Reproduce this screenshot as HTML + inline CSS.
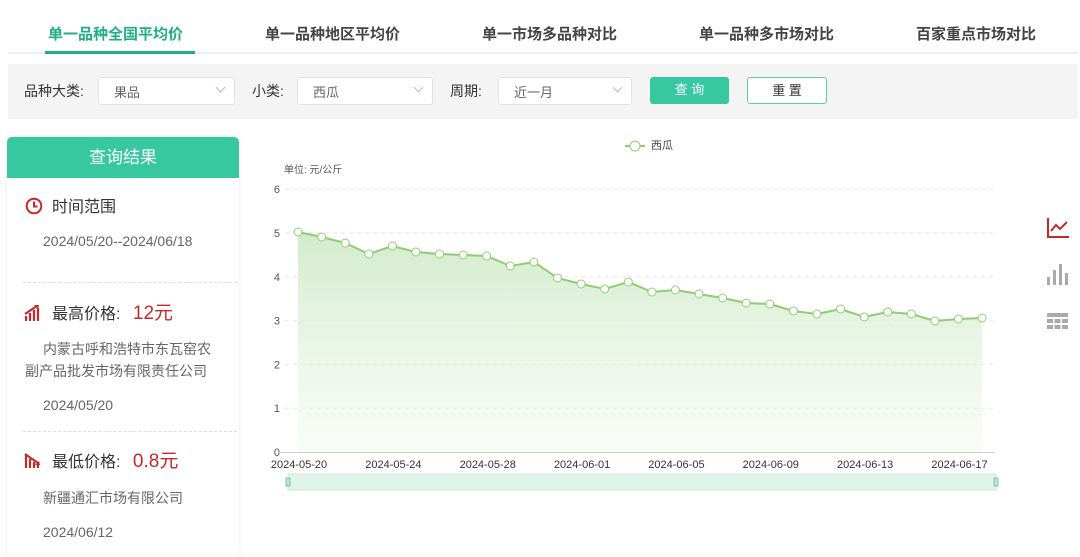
<!DOCTYPE html>
<html><head><meta charset="utf-8">
<style>
*{margin:0;padding:0;box-sizing:border-box}
body{width:1080px;height:552px;background:#fff;font-family:"Liberation Sans","Noto Sans CJK SC",sans-serif;position:relative;overflow:hidden;color:#333}
.tabs{position:absolute;left:8px;top:0;width:1070px;height:54px;border-bottom:2px solid #eef0ef}
.tab{position:absolute;top:23px;font-size:15px;font-weight:bold;color:#444}
.tab.on{color:#1fae85}
.ul{position:absolute;left:37px;top:51px;width:150px;height:3px;background:#1fae85}
.bar{position:absolute;left:8px;top:64px;width:1070px;height:55px;background:#f5f4f4}
.lbl{position:absolute;top:81px;font-size:14px;color:#333}
.sel{position:absolute;top:77px;height:28px;background:#fff;border:1px solid #e2e2e2;border-radius:3px;font-size:13px;color:#666;padding:4px 0 0 15px}
.sel i{position:absolute;right:10px;top:6px;width:7px;height:7px;border-right:1px solid #bbb;border-bottom:1px solid #bbb;transform:rotate(45deg)}
.btn{position:absolute;top:77px;height:27px;border-radius:3px;font-size:13px;text-align:center;line-height:26px}
.panel{position:absolute;left:7px;top:137px;width:232px;height:420px;background:#fff;box-shadow:0 0 6px rgba(0,0,0,.08);border-radius:5px 5px 0 0}
.ph{height:41px;background:#37c8a0;color:#fff;font-size:17px;text-align:center;line-height:41px;border-radius:5px 5px 0 0}
.t{position:absolute;font-size:16px;color:#333}
.g{position:absolute;font-size:14px;color:#666}
.red{color:#c6282c;font-size:19px}
.dash{position:absolute;left:16px;width:214px;border-top:1px dashed #ddd}
</style></head><body>
<div class="tabs">
<div class="tab on" style="left:40px">单一品种全国平均价</div>
<div class="tab" style="left:257px">单一品种地区平均价</div>
<div class="tab" style="left:474px">单一市场多品种对比</div>
<div class="tab" style="left:691px">单一品种多市场对比</div>
<div class="tab" style="left:908px">百家重点市场对比</div>
<div class="ul"></div>
</div>
<div class="bar"></div>
<div class="lbl" style="left:24px">品种大类:</div>
<div class="sel" style="left:98px;width:137px">果品<i></i></div>
<div class="lbl" style="left:252px">小类:</div>
<div class="sel" style="left:297px;width:136px">西瓜<i></i></div>
<div class="lbl" style="left:450px">周期:</div>
<div class="sel" style="left:498px;width:134px">近一月<i></i></div>
<div class="btn" style="left:650px;width:79px;background:#37c8a0;color:#fff">查 询</div>
<div class="btn" style="left:747px;width:80px;background:#fff;border:1px solid #5fcfae;color:#333">重 置</div>

<div class="panel">
<div class="ph">查询结果</div>
<svg style="position:absolute;left:18px;top:60px" width="18" height="18" viewBox="0 0 18 18"><circle cx="9" cy="9" r="7.3" fill="none" stroke="#c6282c" stroke-width="2"/><path d="M9 4.5V9.5H12.5" fill="none" stroke="#c6282c" stroke-width="2"/></svg>
<div class="t" style="left:45px;top:56px">时间范围</div>
<div class="g" style="left:36px;top:96px">2024/05/20--2024/06/18</div>
<div class="dash" style="top:145px"></div>
<svg style="position:absolute;left:17px;top:167px" width="20" height="18" viewBox="0 0 20 18"><path d="M2 17V12M6 17V9M10 17V6M14 17V4M1 10L13 2" stroke="#c6282c" stroke-width="2.2" fill="none"/><path d="M10 1L15 1L14 5Z" fill="#c6282c"/></svg>
<div class="t" style="left:45px;top:161px">最高价格: <span class="red" style="margin-left:8px">12元</span></div>
<div class="g" style="left:36px;top:202px">内蒙古呼和浩特市东瓦窑农</div>
<div class="g" style="left:18px;top:224px">副产品批发市场有限责任公司</div>
<div class="g" style="left:36px;top:260px">2024/05/20</div>
<div class="dash" style="top:294px"></div>
<svg style="position:absolute;left:17px;top:314px" width="20" height="18" viewBox="0 0 20 18"><path d="M2 17V4M6 17V8M10 17V11M14 17V14M1 3L14 12" stroke="#c6282c" stroke-width="2.2" fill="none"/><path d="M16 14L11 14L15 10Z" fill="#c6282c"/></svg>
<div class="t" style="left:45px;top:309px">最低价格: <span class="red" style="margin-left:8px">0.8元</span></div>
<div class="g" style="left:36px;top:351px">新疆通汇市场有限公司</div>
<div class="g" style="left:36px;top:387px">2024/06/12</div>
</div>

<svg id="ch" style="position:absolute;left:0;top:0" width="1080" height="552">
<defs><linearGradient id="gr" x1="0" y1="0" x2="0" y2="1"><stop offset="0" stop-color="#cde9c4" stop-opacity=".9"/><stop offset="1" stop-color="#eef8ec" stop-opacity=".4"/></linearGradient></defs>
<g font-family="Liberation Sans,Noto Sans CJK SC,sans-serif" font-size="11" fill="#555">
<line x1="625" y1="146" x2="645" y2="146" stroke="#91cc75" stroke-width="2"/><circle cx="635" cy="146" r="5" fill="#fff" stroke="#91cc75"/>
<text x="651" y="149" font-size="11" fill="#444">西瓜</text>
<text x="284" y="173" font-size="10">单位: 元/公斤</text>
</g>
<g id="grid" stroke="#e6e6e6" stroke-dasharray="4,4"></g>
<g id="yl" font-family="Liberation Sans,sans-serif" font-size="11" fill="#555" text-anchor="end"></g>
<path id="area" fill="url(#gr)"/>
<polyline id="ln" fill="none" stroke="#91cc75" stroke-width="2"/>
<g id="pts"></g>
<line x1="279" y1="452.5" x2="994" y2="452.5" stroke="#ccc"/>
<g id="xl" font-family="Liberation Sans,sans-serif" font-size="11" fill="#333" text-anchor="middle"></g>
<rect x="288" y="474" width="708" height="16" fill="#e0f5ea" stroke="#cfe6d8"/>
<rect x="286" y="478" width="4" height="8" fill="#bde5cf" stroke="#6bbf97" stroke-width=".8"/>
<rect x="994" y="478" width="4" height="8" fill="#bde5cf" stroke="#6bbf97" stroke-width=".8"/>
<path d="M1048 218V237H1069" fill="none" stroke="#c6282c" stroke-width="2"/><path d="M1051 231L1056 225L1060 229L1067 222" fill="none" stroke="#c6282c" stroke-width="2"/>
<g fill="#aaa"><rect x="1047" y="277" width="3" height="8"/><rect x="1053" y="270" width="3" height="15"/><rect x="1059" y="264" width="3" height="21"/><rect x="1065" y="273" width="3" height="12"/></g>
<g fill="#aaa"><rect x="1047" y="313" width="21" height="4"/><rect x="1047" y="319" width="6" height="4"/><rect x="1054.5" y="319" width="6" height="4"/><rect x="1062" y="319" width="6" height="4"/><rect x="1047" y="325" width="6" height="4"/><rect x="1054.5" y="325" width="6" height="4"/><rect x="1062" y="325" width="6" height="4"/></g>
</svg>
<script>
var ys=[232,237,243,254,246,252,254,255,256,266,262,278,284,289,282,292,290,294,298,303,304,311,314,309,317,312,314,321,319,318];
var ns="http://www.w3.org/2000/svg",p=[];
ys.forEach(function(y,i){p.push((298+i*23.59).toFixed(1)+","+y)});
document.getElementById("ln").setAttribute("points",p.join(" "));
document.getElementById("area").setAttribute("d","M298,452L"+p.join("L")+"L982,452Z");
var g=document.getElementById("pts");
p.forEach(function(s){var a=s.split(","),c=document.createElementNS(ns,"circle");c.setAttribute("cx",a[0]);c.setAttribute("cy",a[1]);c.setAttribute("r","4");c.setAttribute("fill","#fff");c.setAttribute("stroke","#91cc75");g.appendChild(c)});
var gr=document.getElementById("grid"),yl=document.getElementById("yl");
for(var k=0;k<=6;k++){var y=452-k*43.8;if(k>0){var l=document.createElementNS(ns,"line");l.setAttribute("x1",285);l.setAttribute("x2",994);l.setAttribute("y1",y);l.setAttribute("y2",y);gr.appendChild(l);}
var t=document.createElementNS(ns,"text");t.setAttribute("x",280);t.setAttribute("y",y+4);t.textContent=k;yl.appendChild(t);}
var xl=document.getElementById("xl"),d=["05-20","05-24","05-28","06-01","06-05","06-09","06-13","06-17"];
d.forEach(function(s,i){var t=document.createElementNS(ns,"text");t.setAttribute("x",299+i*94.36);t.setAttribute("y",468);t.textContent="2024-"+s;xl.appendChild(t)});
</script>
</body></html>
